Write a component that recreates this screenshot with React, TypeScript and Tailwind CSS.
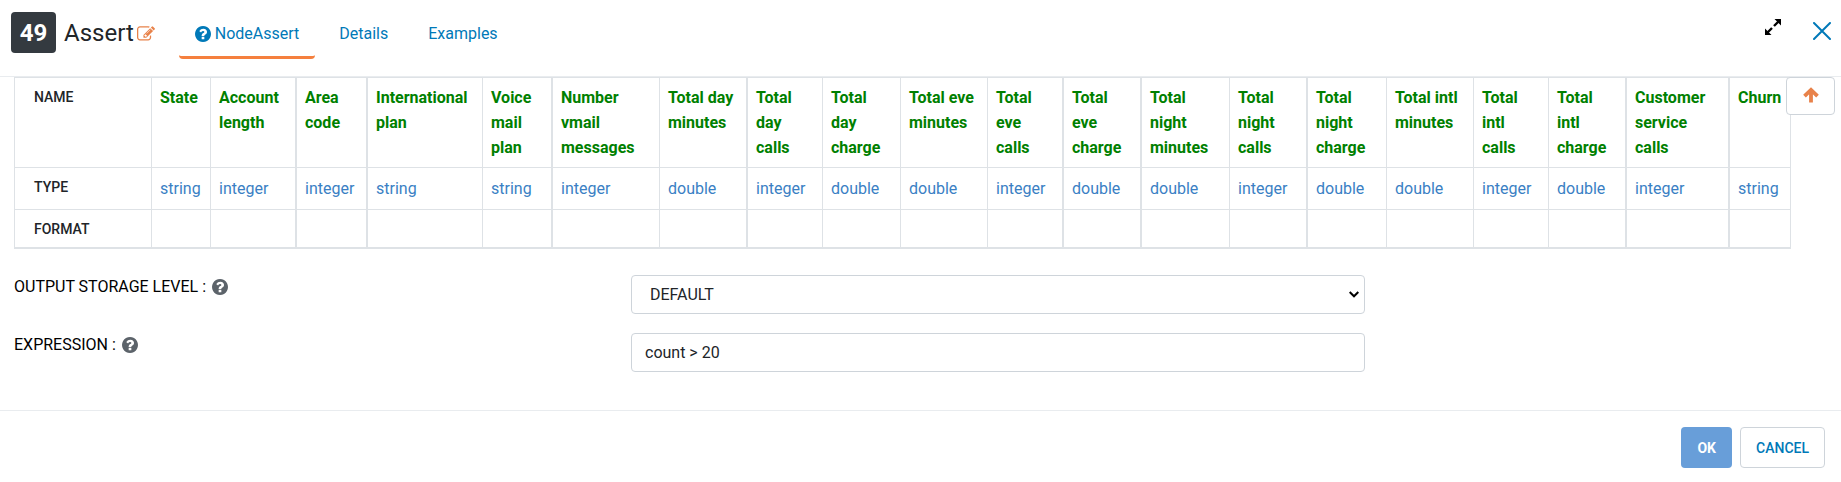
import React from "react";

type Column = { name: string; type: string; width: string };

const columns: Column[] = [
  { name: "State", type: "string", width: "w-[59px] border-r" },
  { name: "Account length", type: "integer", width: "w-[86px] border-r-2" },
  { name: "Area code", type: "integer", width: "w-[71px] border-r-2" },
  { name: "International plan", type: "string", width: "w-[115px] border-r" },
  { name: "Voice mail plan", type: "string", width: "w-[70px] border-r-2" },
  { name: "Number vmail messages", type: "integer", width: "w-[107px] border-r" },
  { name: "Total day minutes", type: "double", width: "w-[88px] border-r-2" },
  { name: "Total day calls", type: "integer", width: "w-[75px] border-r" },
  { name: "Total day charge", type: "double", width: "w-[78px] border-r" },
  { name: "Total eve minutes", type: "double", width: "w-[87px] border-r" },
  { name: "Total eve calls", type: "integer", width: "w-[76px] border-r-2" },
  { name: "Total eve charge", type: "double", width: "w-[78px] border-r-2" },
  { name: "Total night minutes", type: "double", width: "w-[88px] border-r" },
  { name: "Total night calls", type: "integer", width: "w-[78px] border-r-2" },
  { name: "Total night charge", type: "double", width: "w-[79px] border-r" },
  { name: "Total intl minutes", type: "double", width: "w-[87px] border-r" },
  { name: "Total intl calls", type: "integer", width: "w-[75px] border-r" },
  { name: "Total intl charge", type: "double", width: "w-[78px] border-r-2" },
  { name: "Customer service calls", type: "integer", width: "w-[103px] border-r-2" },
  { name: "Churn", type: "string", width: "w-[61px] border-r" },
];

function QuestionIcon({ className }: { className: string }) {
  return (
    <svg viewBox="128 128 1536 1536" fill="currentColor" className={className} aria-hidden="true">
      <path d="M1024 1376v-192q0-14-9-23t-23-9h-192q-14 0-23 9t-9 23v192q0 14 9 23t23 9h192q14 0 23-9t9-23zm256-672q0-88-55.5-163t-138.5-116-170-41q-243 0-371 213-15 24 8 42l132 100q7 6 19 6 16 0 25-12 53-68 86-92 34-24 86-24 48 0 85.5 26t37.5 59q0 38-20 61t-68 45q-63 28-115.5 86.5t-52.5 125.5v36q0 14 9 23t23 9h192q14 0 23-9t9-23q0-19 21.5-49.5t54.5-49.5q32-18 49-28.5t46-35 44.5-48 28-60.5 12.5-81zm384 192q0 209-103 385.5t-279.5 279.5-385.5 103-385.5-103-279.5-279.5-103-385.5 103-385.5 279.5-279.5 385.5-103 385.5 103 279.5 279.5 103 385.5z" />
    </svg>
  );
}

function EditIcon() {
  return (
    <svg viewBox="0 128 1792 1536" fill="currentColor" className="h-4 w-[18px]" aria-hidden="true">
      <path d="M888 1184l116-116-152-152-116 116v56h96v96h56zm440-720q-16-16-33 1l-350 350q-17 17-1 33t33-1l350-350q17-17 1-33zm80 594v190q0 119-84.5 203.5t-203.5 84.5h-832q-119 0-203.5-84.5t-84.5-203.5v-832q0-119 84.5-203.5t203.5-84.5h832q63 0 117 25 15 7 18 23 3 17-9 29l-49 49q-14 14-32 8-23-6-45-6h-832q-66 0-113 47t-47 113v832q0 66 47 113t113 47h832q66 0 113-47t47-113v-126q0-13 9-22l64-64q15-15 35-7t20 29zm-96-738l288 288-672 672h-288v-288zm444 132l-92 92-288-288 92-92q28-28 68-28t68 28l152 152q28 28 28 68t-28 68z" />
    </svg>
  );
}

function ExpandIcon() {
  return (
    <svg viewBox="0 0 16 16" className="size-4" aria-hidden="true">
      <path d="M9.5 0H16v6.5zM0 9.5V16h6.5z" fill="#000" />
      <path d="M13.5 2.5L9 7M7 9L2.5 13.5" stroke="#000" strokeWidth="2.4" fill="none" />
    </svg>
  );
}

const rowHead = "border-r border-[#dee2e6] pl-[19px] text-left align-top text-sm font-medium text-[#212529]";
const tab = "flex h-[59px] items-center pt-[11px]";

export default function App() {
  return (
    <div className="bg-white font-['Roboto',sans-serif] text-base text-[#212529]">
      <header className="flex h-[77px] items-start border-b border-[#e9ecef] pl-[11px] pr-2">
        <span className="mt-3 flex h-[41px] w-[45px] items-center justify-center rounded bg-[#343a40] text-2xl font-bold text-white">
          49
        </span>
        <h1 className="ml-2 mt-[15px] text-2xl leading-9 font-normal">Assert</h1>
        <button type="button" aria-label="Edit name" className="mt-[26px] ml-[3px] text-[#e8824a]">
          <EditIcon />
        </button>
        <nav className="ml-6 flex text-[#0079b8]">
          <a href="#node" className={`${tab} gap-1 rounded-b border-b-3 border-[#f5803e] px-4`}>
            <QuestionIcon className="size-4" />
            NodeAssert
          </a>
          <a href="#details" className={`${tab} border-b-3 border-transparent px-6`}>
            Details
          </a>
          <a href="#examples" className={`${tab} border-b-3 border-transparent px-4`}>
            Examples
          </a>
        </nav>
        <div className="ml-auto flex items-start">
          <button type="button" aria-label="Expand" className="mt-[19px]">
            <ExpandIcon />
          </button>
          <button type="button" aria-label="Close" className="mt-[22px] mr-[2px] ml-8">
            <svg viewBox="0 0 18 18" className="size-[18px]" stroke="#0079b8" strokeWidth="2" strokeLinecap="round" aria-hidden="true">
              <path d="M1 1l16 16M17 1L1 17" />
            </svg>
          </button>
        </div>
      </header>

      <main className="relative px-[14px]">
        <table className="table-fixed border-separate border-spacing-0 border-t border-l border-[#dee2e6]">
          <tbody>
            <tr className="h-[90px]">
              <th scope="row" className={`${rowHead} w-[137px] border-b pt-[9px]`}>NAME</th>
              {columns.map((c) => (
                <th
                  key={c.name}
                  scope="col"
                  className={`${c.width} border-b border-[#dee2e6] px-2 py-[7px] text-left align-top leading-[25px] font-bold text-[#008000]`}
                >
                  {c.name}
                </th>
              ))}
            </tr>
            <tr className="h-[42px]">
              <th scope="row" className={`${rowHead} border-b pt-[9px]`}>TYPE</th>
              {columns.map((c) => (
                <td key={c.name} className={`${c.width} border-b border-[#dee2e6] px-2 text-[#3a7fc4]`}>
                  {c.type}
                </td>
              ))}
            </tr>
            <tr className="h-[39px]">
              <th scope="row" className={`${rowHead} border-b-2 pt-[9px]`}>FORMAT</th>
              {columns.map((c) => (
                <td key={c.name} className={`${c.width} border-b-2 border-[#dee2e6]`} />
              ))}
            </tr>
          </tbody>
        </table>
        <button
          type="button"
          aria-label="Scroll to top"
          className="absolute top-0 right-[6px] flex h-[38px] w-[49px] items-center justify-center rounded border border-[#ced4da] bg-white pb-[2px] text-[#e8824a]"
        >
          <svg viewBox="0 0 16 16" className="size-4" fill="none" stroke="currentColor" strokeWidth="3.8" aria-hidden="true">
            <path d="M8 15.5V3M1.5 9.2L8 2.8L14.5 9.2" />
          </svg>
        </button>

        <form className="mt-[26px] flex flex-col gap-[19px] pb-[38px]">
          <div className="flex items-start">
            <label htmlFor="level" className="flex w-[617px] items-center gap-[6px] leading-[23px] font-normal text-black">
              OUTPUT STORAGE LEVEL :
              <QuestionIcon className="size-4 text-[#5c636a]" />
            </label>
            <div className="relative w-[734px]">
              <select id="level" className="block h-[39px] w-full appearance-none rounded border border-[#ced4da] bg-white px-[18px]">
                <option>DEFAULT</option>
              </select>
              <svg viewBox="0 0 10 7" className="pointer-events-none absolute top-4 right-[6px] h-[7px] w-[10px]" fill="none" stroke="#000" strokeWidth="2" aria-hidden="true">
                <path d="M.7 1L5 5.3L9.3 1" />
              </svg>
            </div>
          </div>
          <div className="flex items-start">
            <label htmlFor="expression" className="flex w-[617px] items-center gap-[6px] leading-[23px] font-normal text-black">
              EXPRESSION :
              <QuestionIcon className="size-4 text-[#5c636a]" />
            </label>
            <input id="expression" defaultValue="count > 20" className="h-[39px] w-[734px] rounded border border-[#ced4da] px-[13px]" />
          </div>
        </form>
      </main>

      <footer className="flex justify-end gap-2 border-t border-[#e9ecef] px-4 pt-4 pb-[14px] text-sm font-medium">
        <button type="button" className="h-[41px] rounded bg-[#689ed9] px-4 font-bold text-white">OK</button>
        <button type="button" className="h-[41px] rounded border border-[#ced4da] px-[15px] text-[#0079b8]">CANCEL</button>
      </footer>
    </div>
  );
}
